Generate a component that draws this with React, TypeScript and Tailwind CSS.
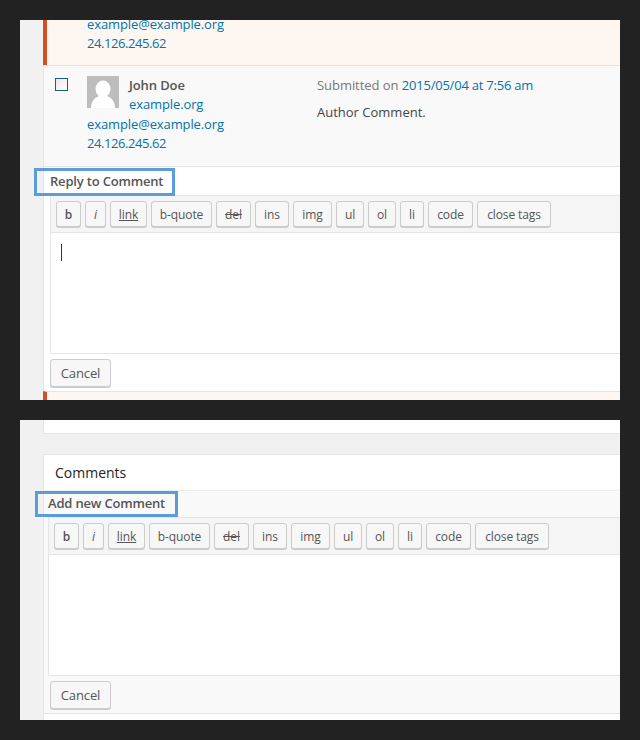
const tags = [
  { label: "b", w: "w-[25px]", cls: "font-semibold" },
  { label: "i", w: "w-[21px]", cls: "italic" },
  { label: "link", w: "w-[37px]", cls: "underline" },
  { label: "b-quote", w: "w-[61px]", cls: "" },
  { label: "del", w: "w-[35px]", cls: "line-through" },
  { label: "ins", w: "w-[34px]", cls: "" },
  { label: "img", w: "w-[39px]", cls: "" },
  { label: "ul", w: "w-[28px]", cls: "" },
  { label: "ol", w: "w-[28px]", cls: "" },
  { label: "li", w: "w-[24px]", cls: "" },
  { label: "code", w: "w-[45px]", cls: "" },
  { label: "close tags", w: "w-[74px]", cls: "" },
];

const Toolbar = () => (
  <div className="flex gap-1 h-[38px] pt-[5px] pl-[5px] bg-[#f5f5f5] border-l border-b border-t border-[#e5e5e5]">
    {tags.map((t) => (
      <button
        key={t.label}
        className={
          "h-[26px] pt-[2px] rounded-[3px] border border-[#cccccc] bg-[#f7f7f7] shadow-[0_1px_0_#cccccc] text-[12px] leading-[22px] text-[#555555] text-center " +
          t.w +
          " " +
          t.cls
        }
      >
        {t.label}
      </button>
    ))}
  </div>
);

const CancelButton = () => (
  <button className="h-[28px] w-[61px] rounded-[3px] border border-[#cccccc] bg-[#f7f7f7] shadow-[0_1px_0_#cccccc] text-[13px] leading-[26px] text-[#555555]">
    Cancel
  </button>
);

const Avatar = () => (
  <svg width="32" height="32" viewBox="0 0 32 32" className="shrink-0">
    <rect width="32" height="32" fill="#bdbdbd" />
    <ellipse cx="16" cy="13" rx="7.500" ry="8.500" fill="#ffffff" />
    <path d="M4 32c0-7 4-10.500 8-12h8c4 1.500 8 5 8 12z" fill="#ffffff" />
  </svg>
);

export default function App() {
  return (
    <div className="w-[640px] h-[740px] overflow-hidden bg-[#222222] p-5 flex flex-col gap-5 font-['Open_Sans',sans-serif] text-[13px] tracking-[-0.11px] text-[#444444]">
      <div className="h-[380px] shrink-0 bg-[#f1f1f1] pl-[23px] overflow-hidden">
        <div className="h-[45px] bg-[#fef7f1] border-l-4 border-[#d54e21] flex flex-col justify-end pb-3 pl-10 text-[#0073aa] leading-[19px]">
          <div>example@example.org</div>
          <div className="tracking-[-0.42px]">24.126.245.62</div>
        </div>

        <div className="h-[102px] bg-[#f9f9f9] border-y border-l border-[#e5e5e5] flex pl-[11px] pt-[10px]">
          <div className="w-[13px] h-[13px] mt-[2px] border border-[#1e5a8e] bg-gradient-to-br from-[#e8e8e8] to-white shrink-0" />
          <div className="ml-[19px] w-[230px] shrink-0">
            <div className="flex">
              <Avatar />
              <div className="ml-[10px] leading-[19px]">
                <div className="font-semibold text-[#555555]">John Doe</div>
                <div className="text-[#0073aa]">example.org</div>
              </div>
            </div>
            <div className="text-[#0073aa] leading-[19px] mt-[1px]">
              <div>example@example.org</div>
              <div className="tracking-[-0.42px]">24.126.245.62</div>
            </div>
          </div>
          <div className="leading-[19px]">
            <div className="text-[#777777] tracking-[-0.05px]">
              Submitted on <span className="text-[#0073aa] tracking-[-0.22px]">2015/05/04 at 7:56 am</span>
            </div>
            <div className="mt-2 text-[#444444] tracking-normal">Author Comment.</div>
          </div>
        </div>

        <div className="h-[224px] bg-white border-l border-[#e5e5e5] relative">
          <div className="h-[28px] pl-[6px] leading-[28px] font-semibold tracking-[-0.18px] text-[#555555]">Reply to Comment</div>
          <div className="absolute left-[-10px] top-[1px] w-[141px] h-[28px] border-[3px] border-[#5b9dd9]" />
          <div className="ml-[6px]">
            <Toolbar />
            <div className="h-[121px] bg-white border-l border-b border-[#e5e5e5] pt-[11px] pl-[10px]">
              <div className="w-px h-[17px] bg-[#333333]" />
            </div>
            <div className="pt-[5px]">
              <CancelButton />
            </div>
          </div>
        </div>
        <div className="h-[9px] bg-[#fef7f1] border-t border-[#e5e5e5] border-l-4 border-l-[#d54e21]" />
      </div>

      <div className="h-[300px] shrink-0 bg-[#f1f1f1] pl-[23px] overflow-hidden">
        <div className="h-[14px] bg-white border-b border-l border-[#e5e5e5]" />
        <div className="mt-[20px] h-[266px] bg-white border-t border-l border-[#e5e5e5]">
          <div className="h-[35px] pl-[11px] leading-[36px] text-[14px] font-medium tracking-normal text-[#222222]">Comments</div>
          <div className="h-[223px] bg-[#f9f9f9] border-t border-[#eeeeee] relative">
            <div className="h-[26px] pl-[4px] leading-[25px] font-semibold tracking-[-0.18px] text-[#555555]">Add new Comment</div>
            <div className="absolute left-[-9px] top-0 w-[143px] h-[26px] border-[3px] border-[#5b9dd9]" />
            <div className="ml-[4px]">
              <Toolbar />
              <div className="h-[121px] bg-white border-l border-b border-[#e5e5e5]" />
              <div className="pt-[5px] pl-[2px]">
                <CancelButton />
              </div>
            </div>
          </div>
          <div className="h-[7px] bg-white border-t border-[#e5e5e5]" />
        </div>
      </div>
    </div>
  );
}
